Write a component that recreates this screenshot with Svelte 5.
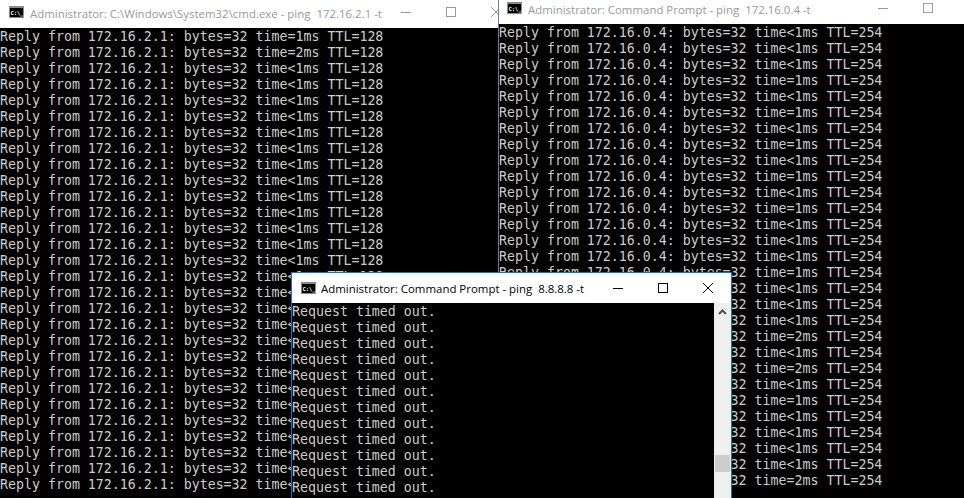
<script lang="ts">
	// '<' = time<1ms, otherwise the ms value
	const leftTimes = '12' + '<'.repeat(27);
	const rightTimes = '<<<1<1<1<1<1<<<1<<<2<2<1<<<<2';

	const reply = (ip: string, t: string, ttl: number) =>
		`Reply from ${ip}: bytes=32 time${t === '<' ? '<1' : '=' + t}ms TTL=${ttl}`;

	const leftLines = [...leftTimes].map((t) => reply('172.16.2.1', t, 128));
	const rightLines = [...rightTimes].map((t) => reply('172.16.0.4', t, 254));
	const frontLines = Array(12).fill('Request timed out.');
</script>

{#snippet cmdIcon()}
	<svg class="cmd-icon" width="15" height="12" viewBox="0 0 15 12">
		<rect width="15" height="12" fill="#8a8a8a" />
		<rect x="1" y="2" width="13" height="9" fill="#000" />
		<text x="1.5" y="9" class="prompt">C:\_</text>
	</svg>
{/snippet}

{#snippet controls()}
	<div class="controls">
		<div class="ctl">
			<svg width="10" height="10" viewBox="0 0 10 10"><path d="M0 5.5h10" stroke="currentColor" /></svg>
		</div>
		<div class="ctl">
			<svg width="10" height="10" viewBox="0 0 10 10"><rect x=".5" y=".5" width="9" height="9" fill="none" stroke="currentColor" /></svg>
		</div>
		<div class="ctl">
			<svg width="10" height="10" viewBox="0 0 10 10"><path d="M0 0l10 10M10 0L0 10" stroke="currentColor" /></svg>
		</div>
	</div>
{/snippet}

<div class="desktop">
	<section class="window left">
		<header class="titlebar">
			{@render cmdIcon()}
			<span class="title">Administrator: C:\Windows\System32\cmd.exe - ping  172.16.2.1 -t</span>
			{@render controls()}
		</header>
		<pre class="console">{leftLines.join('\n')}</pre>
	</section>

	<section class="window right">
		<header class="titlebar">
			{@render cmdIcon()}
			<span class="title">Administrator: Command Prompt - ping  172.16.0.4 -t</span>
			{@render controls()}
		</header>
		<pre class="console">{rightLines.join('\n')}</pre>
	</section>

	<section class="window front">
		<header class="titlebar">
			{@render cmdIcon()}
			<span class="title">Administrator: Command Prompt - ping  8.8.8.8 -t</span>
			{@render controls()}
		</header>
		<div class="body">
			<pre class="console">{frontLines.join('\n')}</pre>
			<div class="scrollbar">
				<svg class="arrow" width="9" height="6" viewBox="0 0 9 6"><path d="M1 5l3.5-3.5L8 5" fill="none" stroke="#505050" stroke-width="2" /></svg>
				<div class="thumb"></div>
			</div>
		</div>
	</section>
</div>

<style>
	:global(body) {
		margin: 0;
		background: #000;
	}

	.desktop {
		position: relative;
		width: 964px;
		height: 498px;
		overflow: hidden;
	}

	.window {
		position: absolute;
		box-sizing: border-box;
		display: flex;
		flex-direction: column;
		background: #000;
	}

	.left {
		left: 0;
		top: 0;
		width: 518px;
		height: 498px;
	}

	.right {
		left: 498px;
		top: 0;
		width: 497px;
		height: 498px;
		border-left: 1px solid #6f7f8c;
	}

	.front {
		left: 291px;
		top: 272px;
		width: 441px;
		height: 226px;
		border: 1px solid #0078d7;
		border-bottom: 0;
	}

	.titlebar {
		flex: none;
		box-sizing: border-box;
		display: flex;
		align-items: center;
		height: 28px;
		background: #fff;
		color: #999;
	}

	.left .titlebar {
		padding: 0 0 4px 9px;
	}

	.left .title {
		margin-top: 2px;
	}

	.right .titlebar {
		height: 24px;
		padding-left: 8px;
		align-items: flex-start;
	}

	.front .titlebar {
		height: 30px;
		padding-left: 9px;
		color: #000;
	}

	.front .controls {
		margin-right: 1px;
	}

	.cmd-icon {
		flex: none;
		margin-right: 6px;
	}

	.right .cmd-icon {
		margin-top: 2px;
	}

	.front .cmd-icon {
		margin-right: 5px;
	}

	.prompt {
		font-family: 'DejaVu Sans Mono', monospace;
		font-size: 5.5px;
		font-weight: bold;
		fill: #fff;
	}

	.title {
		flex: 1;
		min-width: 0;
		white-space: pre;
		font-family: 'Open Sans', sans-serif;
		font-size: 11.45px;
	}

	.right .title {
		line-height: 19px;
	}

	.controls {
		flex: none;
		display: flex;
	}

	.ctl {
		width: 45px;
		display: flex;
		justify-content: center;
		align-items: center;
	}

	.right .ctl {
		height: 16px;
	}

	.console {
		margin: 0;
		padding-top: 1px;
		flex: 1;
		min-width: 0;
		overflow: hidden;
		background: #000;
		color: #cccccc;
		font-family: 'DejaVu Sans Mono', monospace;
		font-size: 13.28px;
		line-height: 16px;
	}

	.body {
		flex: 1;
		min-height: 0;
		display: flex;
	}

	.scrollbar {
		flex: none;
		position: relative;
		width: 17px;
		background: #f0f0f0;
	}

	.arrow {
		position: absolute;
		left: 4px;
		top: 6px;
	}

	.thumb {
		position: absolute;
		left: 1px;
		top: 152px;
		width: 15px;
		height: 17px;
		background: #cdcdcd;
	}
</style>
